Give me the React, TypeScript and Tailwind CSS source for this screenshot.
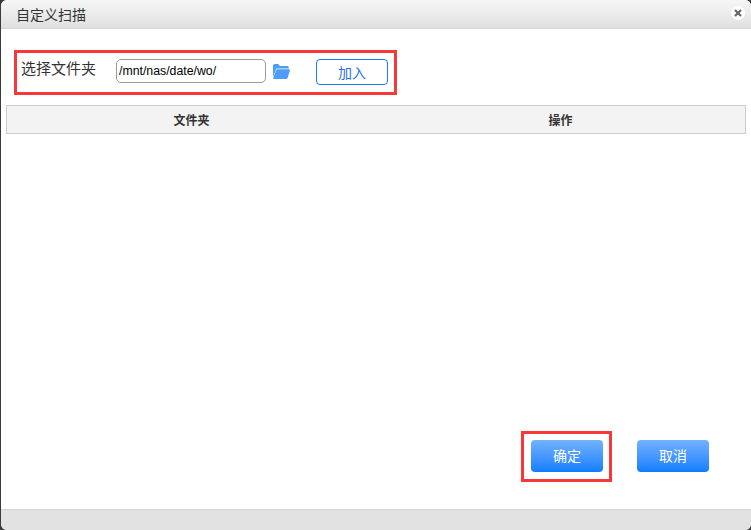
const FONT = "font-['Liberation_Sans','Noto_Sans_CJK_SC',sans-serif]";

function FolderIcon() {
  return (
    <svg width="17" height="15" viewBox="0 0 17 15" className="ml-[7px] mt-[11px] shrink-0">
      <path d="M0 2C0 .8.7 0 1.8 0h3.4l1.6 2h7.4c1 0 1.6.6 1.6 1.5V4.5H4.6C3.6 4.5 3 5 2.7 5.9L0 13z" fill="#4d9cf8" />
      <path d="M4.6 5.2h11.2c.9 0 1.3.5 1.1 1.3l-2.2 7.2c-.3.9-.8 1.3-1.7 1.3H1.2C.4 15 0 14.6.3 13.8L3 6.4c.3-.8.8-1.2 1.6-1.2z" fill="#4d9cf8" />
    </svg>
  );
}

function CloseIcon() {
  return (
    <div className="mb-[2px] flex h-[14px] w-[14px] items-center justify-center rounded-full bg-white">
      <svg width="8" height="8" viewBox="0 0 8 8">
        <path d="M1 1l6 6M7 1L1 7" stroke="#666" strokeWidth="2.2" />
      </svg>
    </div>
  );
}

export default function App() {
  return (
    <div className={`h-[530px] w-[751px] overflow-hidden bg-[#3a3a3a] pl-px ${FONT}`}>
      <div className="flex h-full flex-col overflow-hidden rounded-[6px] bg-white">
        <div className="flex h-[29px] shrink-0 items-center justify-between border-b border-[#d6d6d6] bg-gradient-to-b from-[#f6f6f6] to-[#e0e0e0] pl-[15px] pr-[6px]">
          <span className="mt-[2px] text-[14px] text-[#333]">自定义扫描</span>
          <CloseIcon />
        </div>

        <div className="flex-1 px-[5px]">
          <div className="ml-[8px] mt-[21px] flex h-[45px] w-[383px] items-start border-[3px] border-[#f63838] pl-[4px]">
            <span className="mt-[6px] w-[95px] text-[15px] leading-[20px] text-[#333]">选择文件夹</span>
            <input
              readOnly
              value="/mnt/nas/date/wo/"
              className="mt-[6px] h-[24px] w-[150px] rounded-[5px] border border-[#999] bg-white px-[2px] text-[12.3px] text-black outline-none"
            />
            <FolderIcon />
            <button className="ml-[26px] mt-[6px] h-[26px] w-[72px] rounded-[4px] border border-[#1a7cf5] bg-white pt-[2px] text-[14px] text-[#2b6ff0]">
              加入
            </button>
          </div>

          <div className="mt-[10px] grid h-[29px] w-[740px] grid-cols-2 items-center border border-[#cccccc] bg-[#f3f3f3] pt-[2px] text-center text-[12px] font-bold text-[#333]">
            <span>文件夹</span>
            <span>操作</span>
          </div>
        </div>

        <div className="flex items-center justify-end pr-[42px]">
          <div className="border-[3px] border-[#f63838] pb-[7px] pl-[7px] pr-[6px] pt-[6px]">
            <button className="block h-[32px] w-[72px] rounded-[4px] bg-gradient-to-b from-[#71b2ff] to-[#0a7dff] text-[14px] text-white">
              确定
            </button>
          </div>
          <button className="mb-[1px] ml-[25px] h-[32px] w-[72px] rounded-[4px] bg-gradient-to-b from-[#71b2ff] to-[#0a7dff] text-[14px] text-white">
            取消
          </button>
        </div>

        <div className="mt-[27px] h-[21px] shrink-0 border-t border-[#d4d4d4] bg-[#e2e2e2]" />
      </div>
    </div>
  );
}
